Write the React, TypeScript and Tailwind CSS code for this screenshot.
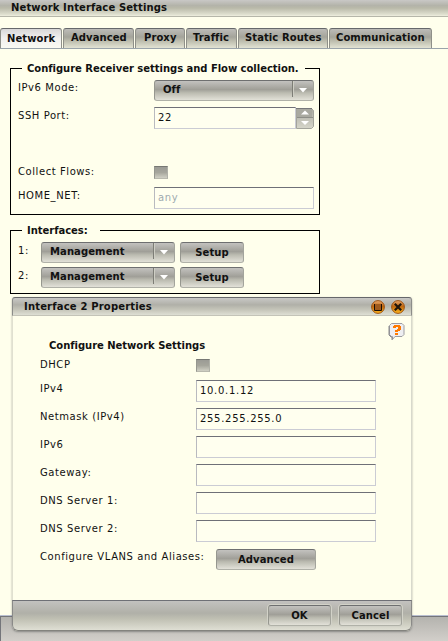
import React from "react";

const btn =
  "bg-[linear-gradient(#c3c2bf_0%,#a09f98_45%,#bbbbb0_62%,#e2e1d8_100%)] border border-t-[#6e6f70] border-l-[#96978f] border-r-[#a3a49c] border-b-[#b0b1a8] rounded-[3px]";
const bar = "bg-[linear-gradient(#c9c8c6_0%,#b3b3a9_35%,#b9b9a9_50%,#dfe0cf_90%,#efefdf_100%)]";
const inputBox =
  "h-[22px] border border-t-[#6f7077] border-l-[#b9babf] border-r-[#cbccd4] border-b-[#cbccd4] bg-[#ffffef] pl-[3px] text-[10px] tracking-[0.7px] leading-[20px]";

function Button({ children, className }: { children: React.ReactNode; className: string }) {
  return (
    <button className={`${btn} ${className} h-[21px] shrink-0 font-bold leading-[18px] tracking-[0.1px]`}>{children}</button>
  );
}

function Select({ value, className }: { value: string; className: string }) {
  return (
    <div className={`${btn} ${className} flex h-[21px] shrink-0 font-bold leading-[18px] tracking-[0.1px]`}>
      <span className="flex-1 pl-2">{value}</span>
      <span className="h-4 w-px bg-[#7d7d76]" />
      <span className="h-4 w-px bg-[#cecec4]" />
      <svg className="h-[19px] w-[19px]" viewBox="0 0 19 19">
        <path d="M5 7h8L9 11.500z" fill="#fff" />
      </svg>
    </div>
  );
}

function Check() {
  return (
    <span className="h-[13px] w-[14px] border border-t-[#777873] border-l-[#96978f] border-r-[#b0b1a8] border-b-[#b9b9ae] bg-[linear-gradient(#9b9b95,#a6a69c_50%,#d0d0c4)]" />
  );
}

function Legend({ children, className }: { children: React.ReactNode; className: string }) {
  return (
    <div className={`${className} -mt-[9px] ml-[4px] h-[18px] bg-[#ffffec] pl-[5px] font-bold leading-[18px] tracking-[-0.03px]`}>
      {children}
    </div>
  );
}

const tabs: [string, string, string][] = [
  ["Network", "w-[62px]", "pl-[6px]"],
  ["Advanced", "w-[71px]", "pl-[7px]"],
  ["Proxy", "w-[50px]", "pl-[8px]"],
  ["Traffic", "w-[51px]", "pl-[6px]"],
  ["Static Routes", "w-[90px]", "pl-[6px]"],
  ["Communication", "w-[103px]", "pl-[6px]"],
];

const fields = [
  ["IPv4", "10.0.1.12"],
  ["Netmask (IPv4)", "255.255.255.0"],
  ["IPv6", ""],
  ["Gateway:", ""],
  ["DNS Server 1:", ""],
  ["DNS Server 2:", ""],
];

function Dialog() {
  return (
    <section className="absolute left-[12px] top-[297px] flex h-[334px] w-[400px] flex-col rounded-t-[3px] rounded-b-[6px] bg-[#ffffec] shadow-[0_1px_2px_#55555588]">
      <header className="flex h-[19px] shrink-0 items-center rounded-t-[3px] border border-x-[#8c8d8a] border-t-[#66676b] border-b-[#c4c4b8] bg-[linear-gradient(#c9c8c6,#b0b0a8_40%,#c6c6ba_70%,#dedfd4)] pl-[11px] font-bold tracking-[0.18px]">
        <span className="flex-1">Interface 2 Properties</span>
        <svg className="mr-[6px]" width="14" height="14" viewBox="0 0 14 14">
          <defs>
            <linearGradient id="orange" x1="0" y1="0" x2="0" y2="1">
              <stop offset="0" stopColor="#e8a870" />
              <stop offset=".45" stopColor="#c06810" />
              <stop offset="1" stopColor="#ffb81e" />
            </linearGradient>
          </defs>
          <circle cx="7" cy="7" r="6.4" fill="url(#orange)" stroke="#9c5517" />
          <path d="M3 4h8v6h-8z" fill="#a05a1c" />
          <path d="M3.500 4v6.500h7v-6.500" fill="none" stroke="#1c0f05" />
        </svg>
        <svg className="mr-[6px]" width="14" height="14" viewBox="0 0 14 14">
          <circle cx="7" cy="7" r="6.4" fill="url(#orange)" stroke="#9c5517" />
          <path d="M3.800 3.800l6.400 6.400M10.200 3.800l-6.400 6.400" stroke="#211509" strokeWidth="2.200" />
        </svg>
      </header>
      <div className="flex h-[284px] shrink-0 flex-col border-x border-l-[#e0e0d0] border-r-[#d8d9cc] pl-[27px]">
        <div className="flex h-[23px] justify-end pt-[7px] pr-[6px]">
          <svg className="shrink-0" width="17" height="18" viewBox="0 0 17 18">
            <path d="M3.500 .5h10.500l2 2v9l-2 2H7L4.500 16.500v-3H3.500l-2-2v-9z" fill="#eeeef1" stroke="#9c9ca0" />
            <path d="M1 3v9l2 2h1v3" fill="none" stroke="#88888c" />
            <path d="M6 2h6v1h1v4h-1v1h-2v1H7V7h2V6h1V4H8v1H5V3h1zM7 10h3v2H7z" fill="#ff7a00" />
          </svg>
        </div>
        <h2 className="h-[20px] pl-[9px] font-bold leading-[14px] tracking-[-0.03px]">Configure Network Settings</h2>
        <div className="flex h-[21px]">
          <span className="w-[156px] leading-[12px]">DHCP</span>
          <Check />
        </div>
        {fields.map(([name, value]) => (
          <div key={name} className="flex h-[28px] shrink-0">
            <span className="w-[156px] leading-[17px]">{name}</span>
            <div className={`${inputBox} w-[180px]`}>{value}</div>
          </div>
        ))}
        <div className="flex pt-px">
          <span className="w-[176px] leading-[15px]">Configure VLANS and Aliases:</span>
          <Button className="w-[100px]">Advanced</Button>
        </div>
      </div>
      <footer className="flex flex-1 justify-end gap-[8px] rounded-b-[6px] border border-x-[#8a8a88] border-t-[#6f7076] border-b-[#83837e] bg-[linear-gradient(#c3c2bf,#b0b0a8_42%,#c0c0b3_62%,#dfdfd4)] pt-[4px] pr-[9px]">
        <Button className="w-[63px] shadow-[0_0_0_1px_#d2d2c8]">OK</Button>
        <Button className="w-[63px] shadow-[0_0_0_1px_#d2d2c8]">Cancel</Button>
      </footer>
    </section>
  );
}

export default function App() {
  return (
    <main className="relative flex h-[641px] w-[448px] flex-col overflow-hidden bg-[#ffffec] font-['DejaVu_Sans',sans-serif] text-[10px] tracking-[0.57px] whitespace-nowrap text-[#111]">
      <header className={`${bar} h-[17px] shrink-0 border-b border-[#b6b7a9] pl-[11px] font-bold leading-[15px] tracking-[0.12px]`}>
        Network Interface Settings
      </header>
      <nav className="mt-[11px] flex h-[21px] shrink-0 gap-px border-b border-[#9aa4ab]">
        {tabs.map(([name, width, pad], i) => (
          <div
            key={name}
            className={`${width} ${pad} h-[20px] shrink-0 rounded-t-[3px] border border-b-0 border-x-[#8f9089] border-t-[#66686b] font-bold tracking-[0.08px] ${
              i === 0
                ? "bg-[linear-gradient(#d9d8d8,#f1f0ef_50%,#fafaf2)] leading-[20px]"
                : "bg-[linear-gradient(#bdbcb8,#a4a49a_42%,#bcbcad_62%,#e2e3d3)] leading-[18px]"
            }`}
          >
            {name}
          </div>
        ))}
      </nav>
      <section className="mt-[19px] ml-[10px] h-[147px] w-[310px] shrink-0 border border-black pl-[7px]">
        <Legend className="w-[283px]">Configure Receiver settings and Flow collection.</Legend>
        <div className="mt-[2px] flex h-[27px]">
          <span className="w-[136px] leading-[15px]">IPv6 Mode:</span>
          <Select value="Off" className="w-[160px]" />
        </div>
        <div className="flex h-[59px]">
          <span className="w-[136px] leading-[17px]">SSH Port:</span>
          <div className={`${inputBox} w-[142px]`}>22</div>
          <svg className="mt-px" width="18" height="21" viewBox="0 0 18 21">
            <defs>
              <linearGradient id="step" x1="0" y1="0" x2="0" y2="1">
                <stop offset="0" stopColor="#aaa9a1" />
                <stop offset="1" stopColor="#d6d6ca" />
              </linearGradient>
            </defs>
            <path d="M.5.5h15l2 2v16l-2 2H.5z" fill="url(#step)" stroke="#a3a49c" />
            <path d="M1 1h15v8H1z" fill="#a9a9a0" />
            <path d="M0 .5h16" stroke="#77787a" />
            <path d="M1 9.500h16" stroke="#8d8e88" />
            <path d="M5 6.500h8L9 2.500zM5 13h8L9 17z" fill="#fff" />
          </svg>
        </div>
        <div className="flex h-[21px]">
          <span className="w-[136px] leading-[12px]">Collect Flows:</span>
          <Check />
        </div>
        <div className="flex">
          <span className="w-[136px] leading-[17px]">HOME_NET:</span>
          <div className={`${inputBox} w-[160px] text-[#9fabb0]`}>any</div>
        </div>
      </section>
      <section className="mt-[15px] ml-[10px] h-[64px] w-[310px] shrink-0 border border-black pl-[7px]">
        <Legend className="w-[78px]">Interfaces:</Legend>
        <div className="mt-[2px] flex flex-col gap-[4px]">
          {["1:", "2:"].map((n) => (
            <div key={n} className="flex">
              <span className="w-[23px] leading-[17px]">{n}</span>
              <Select value="Management" className="mr-[5px] w-[134px]" />
              <Button className="w-[64px]">Setup</Button>
            </div>
          ))}
        </div>
      </section>
      <footer className="mt-auto h-[26px] shrink-0 border-t border-[#b9bfd0]">
        <div className="h-full border border-r-0 border-b-0 border-[#74757a] bg-[linear-gradient(#b4b3ae,#d2cfca)]" />
      </footer>
      <Dialog />
    </main>
  );
}
